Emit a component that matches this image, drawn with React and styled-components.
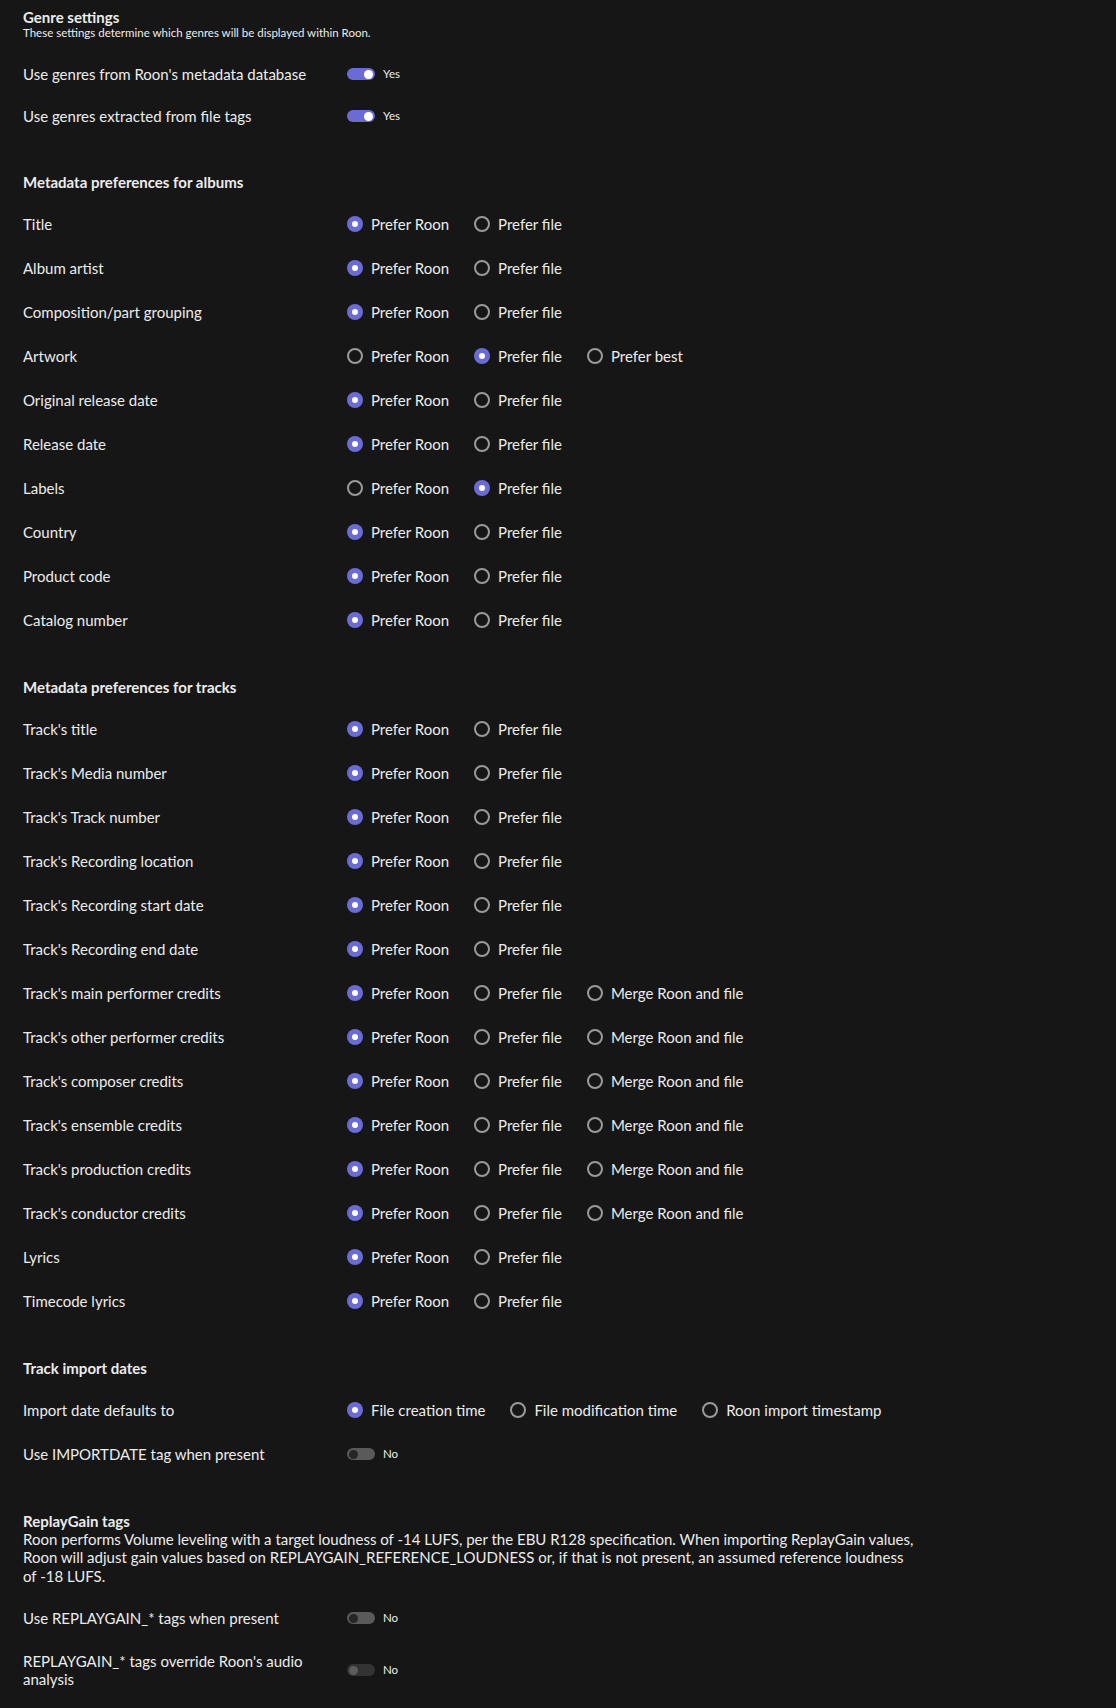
import React from 'react';
import styled, { createGlobalStyle } from 'styled-components';

const GlobalStyle = createGlobalStyle`
  html, body {
    margin: 0;
    padding: 0;
    background: #161616;
  }
  body {
    font-family: Lato, "Open Sans", sans-serif;
    color: #ececec;
  }
`;

const Page = styled.div`
  padding: 8px 23px 24px;
  background: #161616;
  min-height: 1708px;
  box-sizing: border-box;
`;

const Section = styled.section`
  & + & {
    margin-top: 36px;
  }
`;

const SectionHeader = styled.div`
  margin-bottom: ${props => (props.spaced ? '13px' : '11px')};
  max-width: 893px;
`;

const SectionTitle = styled.h2`
  margin: 0;
  font-size: 15px;
  font-weight: 700;
  line-height: 18px;
`;

const SectionNote = styled.p`
  margin: 0;
  font-size: ${props => (props.small ? '11.5px' : '15px')};
  line-height: ${props => (props.small ? '14px' : '18.4px')};
`;

const Row = styled.div`
  display: grid;
  grid-template-columns: 324px 1fr;
  align-items: center;
  min-height: ${props => (props.compact ? '42px' : '44px')};
  padding: ${props => (props.compact ? '0' : '12px 0')};
  box-sizing: border-box;
  font-size: 15px;
  line-height: 18px;
`;

const RowLabel = styled.div`
  padding-right: 20px;
`;

const OptionGroup = styled.div`
  display: flex;
  align-items: center;
  gap: 25px;
`;

const Option = styled.label`
  display: flex;
  align-items: center;
  gap: 8px;
  white-space: nowrap;
`;

const RadioDot = styled.span`
  width: 16px;
  height: 16px;
  flex: none;
  box-sizing: border-box;
  border-radius: 50%;
  display: flex;
  align-items: center;
  justify-content: center;
  border: ${props => (props.checked ? 'none' : '2px solid #9a9a9a')};
  background: ${props => (props.checked ? '#6b6bd6' : 'transparent')};

  &::after {
    content: '';
    width: 6px;
    height: 6px;
    border-radius: 50%;
    background: #fff;
    display: ${props => (props.checked ? 'block' : 'none')};
  }
`;

const ToggleWrap = styled.div`
  display: flex;
  align-items: center;
  gap: 8px;
  font-size: 11.5px;
`;

const Track = styled.span`
  width: 28px;
  height: 12px;
  border-radius: 6px;
  box-sizing: border-box;
  padding: 0 2px;
  display: flex;
  align-items: center;
  justify-content: ${props => (props.on ? 'flex-end' : 'flex-start')};
  background: ${props =>
    props.on ? '#6b6bd6' : props.disabled ? '#333333' : '#5a5a5a'};
`;

const Knob = styled.span`
  width: 9px;
  height: 9px;
  border-radius: 50%;
  background: ${props =>
    props.on ? '#ffffff' : props.disabled ? '#5c5c5c' : '#262626'};
`;

const Toggle = ({ on, disabled }) => (
  <ToggleWrap>
    <Track on={on} disabled={disabled}>
      <Knob on={on} disabled={disabled} />
    </Track>
    <span>{on ? 'Yes' : 'No'}</span>
  </ToggleWrap>
);

const Radios = ({ options, value }) => (
  <OptionGroup>
    {options.map((opt, i) => (
      <Option key={opt}>
        <RadioDot checked={i === value} />
        {opt}
      </Option>
    ))}
  </OptionGroup>
);

const TWO = ['Prefer Roon', 'Prefer file'];
const MERGE = ['Prefer Roon', 'Prefer file', 'Merge Roon and file'];

const albumRows = [
  ['Title', TWO, 0],
  ['Album artist', TWO, 0],
  ['Composition/part grouping', TWO, 0],
  ['Artwork', ['Prefer Roon', 'Prefer file', 'Prefer best'], 1],
  ['Original release date', TWO, 0],
  ['Release date', TWO, 0],
  ['Labels', TWO, 1],
  ['Country', TWO, 0],
  ['Product code', TWO, 0],
  ['Catalog number', TWO, 0],
];

const trackRows = [
  ["Track's title", TWO, 0],
  ["Track's Media number", TWO, 0],
  ["Track's Track number", TWO, 0],
  ["Track's Recording location", TWO, 0],
  ["Track's Recording start date", TWO, 0],
  ["Track's Recording end date", TWO, 0],
  ["Track's main performer credits", MERGE, 0],
  ["Track's other performer credits", MERGE, 0],
  ["Track's composer credits", MERGE, 0],
  ["Track's ensemble credits", MERGE, 0],
  ["Track's production credits", MERGE, 0],
  ["Track's conductor credits", MERGE, 0],
  ['Lyrics', TWO, 0],
  ['Timecode lyrics', TWO, 0],
];

const RadioRows = ({ rows }) =>
  rows.map(([label, options, value]) => (
    <Row key={label}>
      <RowLabel>{label}</RowLabel>
      <Radios options={options} value={value} />
    </Row>
  ));

const App = () => (
  <>
    <GlobalStyle />
    <Page>
      <Section>
        <SectionHeader spaced>
          <SectionTitle>Genre settings</SectionTitle>
          <SectionNote small>
            These settings determine which genres will be displayed within Roon.
          </SectionNote>
        </SectionHeader>
        <Row compact>
          <RowLabel>Use genres from Roon's metadata database</RowLabel>
          <Toggle on />
        </Row>
        <Row compact>
          <RowLabel>Use genres extracted from file tags</RowLabel>
          <Toggle on />
        </Row>
      </Section>

      <Section>
        <SectionHeader>
          <SectionTitle>Metadata preferences for albums</SectionTitle>
        </SectionHeader>
        <RadioRows rows={albumRows} />
      </Section>

      <Section>
        <SectionHeader>
          <SectionTitle>Metadata preferences for tracks</SectionTitle>
        </SectionHeader>
        <RadioRows rows={trackRows} />
      </Section>

      <Section>
        <SectionHeader>
          <SectionTitle>Track import dates</SectionTitle>
        </SectionHeader>
        <Row>
          <RowLabel>Import date defaults to</RowLabel>
          <Radios
            options={['File creation time', 'File modification time', 'Roon import timestamp']}
            value={0}
          />
        </Row>
        <Row>
          <RowLabel>Use IMPORTDATE tag when present</RowLabel>
          <Toggle />
        </Row>
      </Section>

      <Section>
        <SectionHeader>
          <SectionTitle>ReplayGain tags</SectionTitle>
          <SectionNote>
            Roon performs Volume leveling with a target loudness of -14 LUFS, per the EBU R128
            specification. When importing ReplayGain values, Roon will adjust gain values based on
            REPLAYGAIN_REFERENCE_LOUDNESS or, if that is not present, an assumed reference loudness
            of -18 LUFS.
          </SectionNote>
        </SectionHeader>
        <Row>
          <RowLabel>Use REPLAYGAIN_* tags when present</RowLabel>
          <Toggle />
        </Row>
        <Row>
          <RowLabel>REPLAYGAIN_* tags override Roon's audio analysis</RowLabel>
          <Toggle disabled />
        </Row>
      </Section>
    </Page>
  </>
);

export default App;
